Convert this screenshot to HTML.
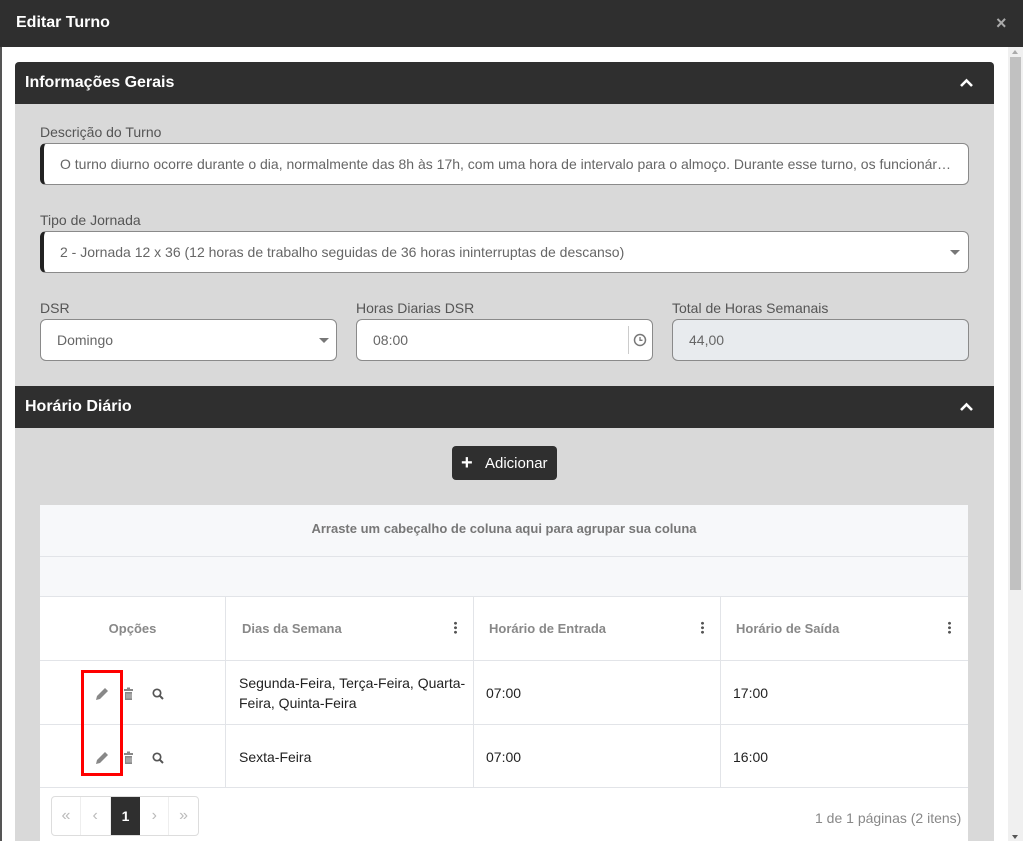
<!DOCTYPE html>
<html><head><meta charset="utf-8"><style>
*{box-sizing:border-box;margin:0;padding:0}
body{width:1023px;height:841px;overflow:hidden;font-family:"Liberation Sans",sans-serif;background:#fff;position:relative}
.a{position:absolute}
.hdr{background:#2f2f2f;color:#fff;font-weight:bold}
.lbl{color:#555;font-size:14px}
.inp{background:#fff;border:1px solid #8a8a8a;border-radius:6px;color:#666;font-size:14px;padding-left:16px;display:flex;align-items:center;white-space:nowrap;overflow:hidden}
.inp.l{border-left:4px solid #222}
.th{color:#888;font-size:13px;font-weight:bold;display:flex;align-items:center}
.td{color:#222;font-size:14px;display:flex;align-items:center;line-height:20px}
.dots{position:absolute;width:3px;height:13px;background:radial-gradient(circle,#555 1.3px,transparent 1.6px) 0 0/3px 4.5px repeat-y}
.caret{position:absolute;width:0;height:0;border-left:5px solid transparent;border-right:5px solid transparent;border-top:5px solid #777}
</style></head><body>
<div class="a hdr" style="left:0;top:0;width:1023px;height:47px;font-size:16px;padding:14px 16px">Editar Turno</div>
<div class="a" style="left:996px;top:13px;color:#aaa;font-size:18px;font-weight:bold">×</div>
<div class="a" style="left:0;top:47px;width:2px;height:794px;background:#555"></div>
<div class="a" style="left:1008px;top:47px;width:15px;height:794px;background:#f0f0f0"></div>
<div class="a" style="left:1010px;top:57px;width:11px;height:533px;background:#c1c1c1"></div>
<div class="a" style="left:1012px;top:50px;border-left:3px solid transparent;border-right:3px solid transparent;border-bottom:4px solid #aaa;width:0"></div>
<div class="a" style="left:1012px;top:835px;border-left:3px solid transparent;border-right:3px solid transparent;border-top:4px solid #555;width:0"></div>
<div class="a" style="left:15px;top:62px;width:979px;height:779px;background:#d9d9d9;border-radius:4px 4px 0 0"></div>
<div class="a hdr" style="left:15px;top:62px;width:979px;height:42px;font-size:16px;padding:12px 10px;border-radius:4px 4px 0 0">Informações Gerais</div>
<svg class="a" style="left:959px;top:77px" width="15" height="12"><path d="M2 9 L7.5 3.5 L13 9" stroke="#fff" stroke-width="2.6" fill="none"/></svg>
<div class="a lbl" style="left:40px;top:124px">Descrição do Turno</div>
<div class="a inp l" style="left:40px;top:143px;width:929px;height:42px">O turno diurno ocorre durante o dia, normalmente das 8h às 17h, com uma hora de intervalo para o almoço. Durante esse turno, os funcionár…</div>
<div class="a lbl" style="left:40px;top:212px">Tipo de Jornada</div>
<div class="a inp l" style="left:40px;top:231px;width:929px;height:42px">2 - Jornada 12 x 36 (12 horas de trabalho seguidas de 36 horas ininterruptas de descanso)</div>
<div class="caret" style="left:950px;top:250px"></div>
<div class="a lbl" style="left:40px;top:300px">DSR</div>
<div class="a lbl" style="left:356px;top:300px">Horas Diarias DSR</div>
<div class="a lbl" style="left:672px;top:300px">Total de Horas Semanais</div>
<div class="a inp" style="left:40px;top:319px;width:297px;height:42px">Domingo</div>
<div class="caret" style="left:319px;top:338px"></div>
<div class="a inp" style="left:356px;top:319px;width:297px;height:42px">08:00</div>
<div class="a" style="left:628px;top:326px;width:1px;height:28px;background:#ccc"></div>
<svg class="a" style="left:633px;top:333px" width="14" height="14"><circle cx="7" cy="7" r="5.5" stroke="#777" stroke-width="1.5" fill="none"/><path d="M7 4v3.3h2.5" stroke="#777" stroke-width="1.3" fill="none"/></svg>
<div class="a inp" style="left:672px;top:319px;width:297px;height:42px;background:#e8ebee">44,00</div>
<div class="a hdr" style="left:15px;top:386px;width:979px;height:42px;font-size:16px;padding:12px 10px">Horário Diário</div>
<svg class="a" style="left:959px;top:401px" width="15" height="12"><path d="M2 9 L7.5 3.5 L13 9" stroke="#fff" stroke-width="2.6" fill="none"/></svg>
<div class="a" style="left:452px;top:446px;width:105px;height:34px;background:#2f2f2f;border-radius:4px;color:#fff;font-size:15px;display:flex;align-items:center;padding-left:33px">Adicionar</div>
<div class="a" style="left:461px;top:453px;color:#fff;font-size:20px;font-weight:bold;line-height:20px">+</div>
<div class="a" style="left:40px;top:505px;width:928px;height:336px;background:#fff"></div>
<div class="a" style="left:40px;top:505px;width:928px;height:91px;background:#f7f8fa"></div>
<div class="a" style="left:40px;top:505px;width:928px;height:52px;border-bottom:1px solid #e2e4e8;color:#777;font-size:13px;font-weight:bold;display:flex;align-items:center;justify-content:center;padding-bottom:4px">Arraste um cabeçalho de coluna aqui para agrupar sua coluna</div>
<div class="a" style="left:40px;top:596px;width:928px;height:1px;background:#e2e4e8"></div>
<div class="a" style="left:40px;top:660px;width:928px;height:1px;background:#e2e4e8"></div>
<div class="a" style="left:40px;top:724px;width:928px;height:1px;background:#e2e4e8"></div>
<div class="a" style="left:40px;top:787px;width:928px;height:1px;background:#e2e4e8"></div>
<div class="a" style="left:225px;top:596px;width:1px;height:192px;background:#e2e4e8"></div>
<div class="a" style="left:473px;top:596px;width:1px;height:192px;background:#e2e4e8"></div>
<div class="a" style="left:720px;top:596px;width:1px;height:192px;background:#e2e4e8"></div>
<div class="a th" style="left:40px;top:597px;width:185px;height:63px;justify-content:center">Opções</div>
<div class="a th" style="left:242px;top:597px;height:63px">Dias da Semana</div>
<div class="a th" style="left:489px;top:597px;height:63px">Horário de Entrada</div>
<div class="a th" style="left:736px;top:597px;height:63px">Horário de Saída</div>
<div class="dots" style="left:454px;top:621px"></div>
<div class="dots" style="left:701px;top:621px"></div>
<div class="dots" style="left:948px;top:621px"></div>
<div class="a td" style="left:239px;top:661px;width:230px;height:63px">Segunda-Feira, Terça-Feira, Quarta-Feira, Quinta-Feira</div>
<div class="a td" style="left:486px;top:661px;height:63px">07:00</div>
<div class="a td" style="left:733px;top:661px;height:63px">17:00</div>
<div class="a td" style="left:239px;top:725px;height:63px">Sexta-Feira</div>
<div class="a td" style="left:486px;top:725px;height:63px">07:00</div>
<div class="a td" style="left:733px;top:725px;height:63px">16:00</div>
<svg class="a" style="left:94px;top:686px" width="80" height="16"><path d="M2 14 L3 10 L11 2 L14 5 L6 13 Z" fill="#888"/><rect x="30" y="3" width="9" height="2" fill="#888"/><rect x="33" y="1.5" width="3" height="2" fill="#888"/><path d="M31 6h7v8h-7z" fill="#888"/><path d="M33 7.5v5M35 7.5v5M37 7.5v5" stroke="#ddd" stroke-width=".7"/><circle cx="63" cy="7" r="3.7" stroke="#555" stroke-width="1.7" fill="none"/><path d="M65.7 9.7 L69 13" stroke="#555" stroke-width="2"/></svg>
<svg class="a" style="left:94px;top:750px" width="80" height="16"><path d="M2 14 L3 10 L11 2 L14 5 L6 13 Z" fill="#888"/><rect x="30" y="3" width="9" height="2" fill="#888"/><rect x="33" y="1.5" width="3" height="2" fill="#888"/><path d="M31 6h7v8h-7z" fill="#888"/><path d="M33 7.5v5M35 7.5v5M37 7.5v5" stroke="#ddd" stroke-width=".7"/><circle cx="63" cy="7" r="3.7" stroke="#555" stroke-width="1.7" fill="none"/><path d="M65.7 9.7 L69 13" stroke="#555" stroke-width="2"/></svg>
<div class="a" style="left:81px;top:670px;width:42px;height:106px;border:3px solid #f00"></div>
<div class="a" style="left:51px;top:796px;width:148px;height:40px;border:1px solid #ddd;border-radius:4px;display:flex;color:#bbb;font-size:16px">
<div style="width:29px;display:flex;align-items:center;justify-content:center;border-right:1px solid #eee">«</div>
<div style="width:30px;display:flex;align-items:center;justify-content:center;border-right:1px solid #eee">‹</div>
<div style="width:30px;display:flex;align-items:center;justify-content:center;background:#2f2f2f;color:#fff;font-weight:bold;font-size:14px">1</div>
<div style="width:29px;display:flex;align-items:center;justify-content:center;border-right:1px solid #eee">›</div>
<div style="width:29px;display:flex;align-items:center;justify-content:center">»</div>
</div>
<div class="a" style="left:815px;top:810px;color:#888;font-size:14px">1 de 1 páginas (2 itens)</div>
</body></html>
